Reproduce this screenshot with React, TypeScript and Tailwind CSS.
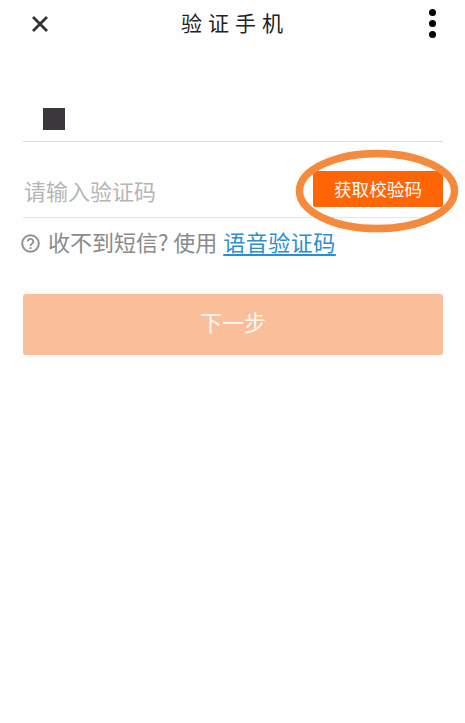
export default function App() {
  const cjk = { fontFamily: '"Noto Sans CJK SC", "Liberation Sans", sans-serif' };
  return (
    <div className="w-[465px] h-[723px] bg-[#fefefe] overflow-hidden flex flex-col pl-[23px] pr-[22px]" style={cjk}>
      <header className="h-[48px] flex items-center justify-between shrink-0">
        <svg className="ml-[8px]" width="18" height="18" viewBox="0 0 18 18" fill="none">
          <path d="M2 2 L16 16 M16 2 L2 16" stroke="#333333" strokeWidth="2.8" />
        </svg>
        <h1 className="text-[21px] leading-[24px] font-normal tracking-[6px] text-[#222222] -ml-[1px] -mt-[4px]" style={{ fontFamily: '"Noto Sans CJK TC", sans-serif' }}>验证手机</h1>
        <div className="w-[20px] mr-[1px] flex flex-col items-center gap-[4px] -mt-[2px]">
          <span className="w-[7px] h-[7px] rounded-full bg-black" />
          <span className="w-[7px] h-[7px] rounded-full bg-black" />
          <span className="w-[7px] h-[7px] rounded-full bg-black" />
        </div>
      </header>

      <div className="h-[94px] shrink-0 flex items-end pb-[11px] pl-[20px] border-b border-[#dddddd]">
        <div className="w-[22px] h-[22px] bg-[#3a383b]" />
      </div>

      <div className="relative h-[76px] shrink-0 flex items-center justify-between border-b border-[#e6e6e6]">
        <span className="text-[22px] leading-[30px] text-[#b5b5b5] pl-[1px] mt-[21px]">请输入验证码</span>
        <button className="w-[130px] h-[36px] bg-[#ff6505] text-white text-[17.6px] leading-[34px] rounded-[2px] mt-[18px] whitespace-nowrap">获取校验码</button>
        <svg className="absolute left-[271px] top-[6px]" width="166" height="86" viewBox="0 0 166 86" fill="none">
          <ellipse cx="83" cy="43" rx="77.5" ry="37.5" stroke="#f58a3c" strokeWidth="7.5" />
        </svg>
      </div>

      <div className="h-[50px] shrink-0 flex items-center gap-[9px] -ml-[2px]">
        <svg className="mt-[1px]" width="19" height="19" viewBox="0 0 19 19" fill="none">
          <circle cx="9.5" cy="9.5" r="8.3" stroke="#909090" strokeWidth="2" />
          <path d="M6.8 7.5 a2.7 2.6 0 1 1 4 2.3 c-1 .6 -1.3 1 -1.3 2.2" stroke="#909090" strokeWidth="1.8" fill="none" />
          <circle cx="9.5" cy="14.2" r="1.1" fill="#909090" />
        </svg>
        <p className="text-[22px] leading-[28px] text-[#8a8a8a] whitespace-nowrap -mt-[5px] -ml-[1px]">
          收不到短信? 使用 <a className="text-[#2a8fd0] underline underline-offset-[3px] tracking-[0.5px] ml-[1px]">语音验证码</a>
        </p>
      </div>

      <button className="mt-[26px] h-[61px] shrink-0 w-full bg-[#fabf9a] rounded-[3px] text-[#fff6ef] text-[22px] pb-[6px]">下一步</button>
    </div>
  );
}
